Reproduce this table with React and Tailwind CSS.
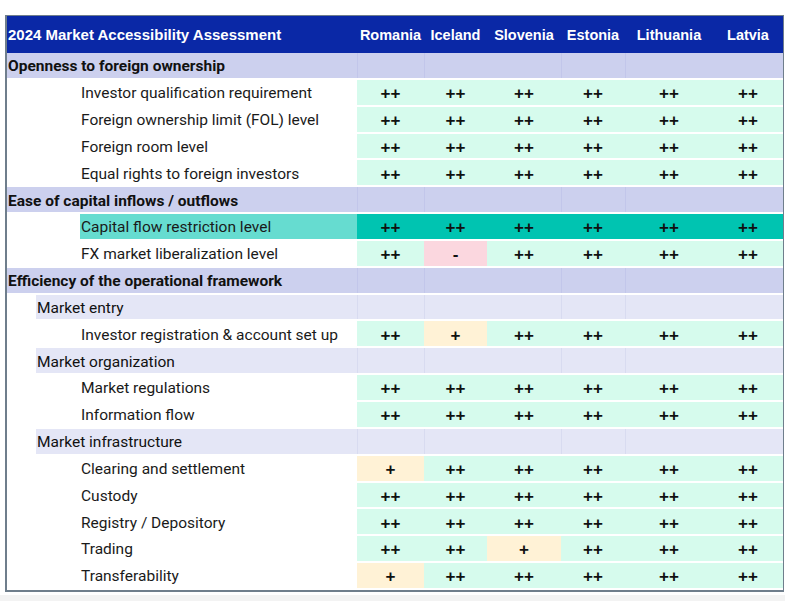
import React from 'react';

const COUNTRIES = ['Romania', 'Iceland', 'Slovenia', 'Estonia', 'Lithuania', 'Latvia'];
const COL_W = ['w-[67px]', 'w-[63px]', 'w-[74px]', 'w-[64px]', 'w-[88px]', 'w-[70px]'];
const LINE_COLS = [true, true, false, true, true, false];

const ALL = ['++', '++', '++', '++', '++', '++'];

const rows = [
  { type: 'group', label: 'Openness to foreign ownership' },
  { type: 'item', label: 'Investor qualification requirement', values: ALL },
  { type: 'item', label: 'Foreign ownership limit (FOL) level', values: ALL },
  { type: 'item', label: 'Foreign room level', values: ALL },
  { type: 'item', label: 'Equal rights to foreign investors', values: ALL },
  { type: 'group', label: 'Ease of capital inflows / outflows' },
  { type: 'item', label: 'Capital flow restriction level', values: ALL, highlight: true },
  { type: 'item', label: 'FX market liberalization level', values: ['++', '-', '++', '++', '++', '++'] },
  { type: 'group', label: 'Efficiency of the operational framework' },
  { type: 'sub', label: 'Market entry' },
  { type: 'item', label: 'Investor registration & account set up', values: ['++', '+', '++', '++', '++', '++'] },
  { type: 'sub', label: 'Market organization' },
  { type: 'item', label: 'Market regulations', values: ALL },
  { type: 'item', label: 'Information flow', values: ALL },
  { type: 'sub', label: 'Market infrastructure' },
  { type: 'item', label: 'Clearing and settlement', values: ['+', '++', '++', '++', '++', '++'] },
  { type: 'item', label: 'Custody', values: ALL },
  { type: 'item', label: 'Registry / Depository', values: ALL },
  { type: 'item', label: 'Trading', values: ['++', '++', '+', '++', '++', '++'] },
  { type: 'item', label: 'Transferability', values: ['+', '++', '++', '++', '++', '++'] },
];

const cellBg = (v, highlight) => {
  if (highlight) return 'bg-[#00c4b1]';
  if (v === '-') return 'bg-[#fbd7df]';
  if (v === '+') return 'bg-[#fff2d6]';
  return 'bg-[#d6fbed]';
};

const GroupRow = ({ label, sub }) => {
  const bg = sub ? 'bg-[#e4e6f6]' : 'bg-[#ccd0ee]';
  const line = sub ? 'border-[#d8dbf0]' : 'border-[#c2c6ea]';
  return (
    <div className="flex h-[26.85px] pb-[2px]">
      <div className={`w-[350px] flex items-center ${sub ? 'pl-[29px]' : ''}`}>
        <div
          className={`h-full flex-1 flex items-center pt-[3px] pl-[1px] text-[15.5px] ${bg} ${
            sub ? 'font-normal' : 'font-bold'
          } text-[#111]`}
        >
          {label}
        </div>
      </div>
      {COL_W.map((w, i) => (
        <div
          key={i}
          className={`${w} h-full ${bg} ${LINE_COLS[i] ? `border-l ${line}` : ''}`}
        />
      ))}
    </div>
  );
};

const ItemRow = ({ label, values, highlight }) => (
  <div className="flex h-[26.85px] pb-[2px]">
    <div className="w-[350px] h-full pl-[73px] flex">
      <div
        className={`flex-1 h-full flex items-center pt-[3px] pl-[1px] text-[15.5px] text-[#1a1a1a] ${
          highlight ? 'bg-[#66dcd0]' : ''
        }`}
      >
        {label}
      </div>
    </div>
    {values.map((v, i) => (
      <div
        key={i}
        className={`${COL_W[i]} h-full flex items-center justify-center pt-[3px] font-bold text-[17px] font-['Liberation_Sans',sans-serif] text-[#111] ${cellBg(
          v,
          highlight
        )}`}
      >
        {v}
      </div>
    ))}
  </div>
);

export default function App() {
  return (
    <div className="w-[792px] h-[601px] bg-white relative overflow-hidden font-['Roboto',sans-serif]">
      <div className="pt-[15px] pl-[5px]">
        <div className="w-[779px] border-t border-r border-l-2 border-b-2 border-[#6f7e8c]">
          <div className="flex h-[37px] bg-[#0a28a6] text-white font-bold text-[14.5px] font-['Liberation_Sans',sans-serif]">
            <div className="w-[350px] flex items-center pl-[1px] pt-[2px] text-[15px]">2024 Market Accessibility Assessment</div>
            {COUNTRIES.map((c, i) => (
              <div key={c} className={`${COL_W[i]} flex items-center justify-center pt-[2px]`}>
                {c}
              </div>
            ))}
          </div>
          {rows.map((r, idx) =>
            r.type === 'item' ? (
              <ItemRow key={idx} label={r.label} values={r.values} highlight={r.highlight} />
            ) : (
              <GroupRow key={idx} label={r.label} sub={r.type === 'sub'} />
            )
          )}
        </div>
      </div>
      <div className="mt-[3px] w-[785px] h-[8px] bg-[#f3f3f3]" />
    </div>
  );
}
